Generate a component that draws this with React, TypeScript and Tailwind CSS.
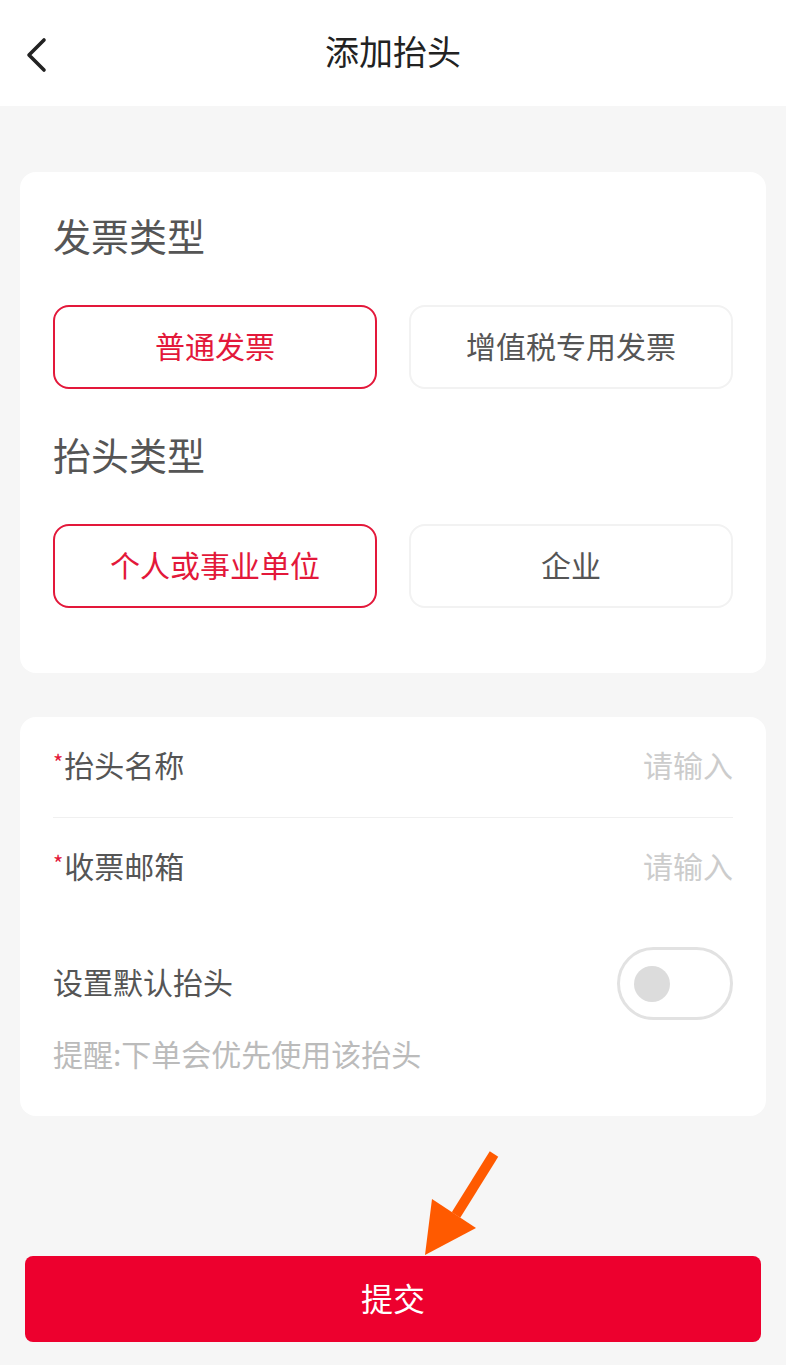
import { useState } from "react";

const FONT = "font-['Noto_Sans_CJK_SC','Noto_Sans',sans-serif]";

function OptionButton({
  label,
  active,
  onClick,
}: {
  label: string;
  active: boolean;
  onClick: () => void;
}) {
  return (
    <button
      type="button"
      onClick={onClick}
      className={
        active
          ? "flex h-[84px] flex-1 items-center justify-center rounded-[16px] border-2 border-[#e3183a] bg-white pb-[4px] text-[30px] text-[#e3183a]"
          : "flex h-[84px] flex-1 items-center justify-center rounded-[16px] border-2 border-[#f2f2f2] bg-white pb-[4px] text-[30px] text-[#555555]"
      }
    >
      {label}
    </button>
  );
}

function InputRow({ label, withBorder }: { label: string; withBorder?: boolean }) {
  return (
    <div
      className={
        withBorder
          ? "flex h-[101px] items-center border-b border-[#f0f0f0] pb-[5px]"
          : "flex h-[100px] items-center pb-[5px]"
      }
    >
      <span className="relative -top-[4px] mr-[1px] text-[22px] leading-none text-[#e3183a]">*</span>
      <span className="text-[30px] text-[#555555]">{label}</span>
      <input
        placeholder="请输入"
        className="ml-auto w-[260px] bg-transparent text-right text-[30px] text-[#333333] outline-none placeholder:text-[#cccccc]"
      />
    </div>
  );
}

export default function App() {
  const [invoiceType, setInvoiceType] = useState("normal");
  const [titleType, setTitleType] = useState("personal");
  const [isDefault, setIsDefault] = useState(false);

  return (
    <div className={`relative flex min-h-[1365px] w-full flex-col bg-[#f6f6f6] ${FONT}`}>
      {/* header */}
      <div className="relative flex h-[106px] items-center justify-center bg-white pb-[5px]">
        <button type="button" className="absolute left-[21px] top-[33px] p-1">
          <svg width="24" height="36" viewBox="0 0 24 36" fill="none">
            <polyline
              points="19,3 4,18 19,33"
              stroke="#222222"
              strokeWidth="3.6"
              strokeLinecap="round"
              strokeLinejoin="round"
            />
          </svg>
        </button>
        <h1 className="text-[34px] font-normal text-[#222222]">添加抬头</h1>
      </div>

      {/* invoice type card */}
      <div className="mx-[20px] mt-[66px] rounded-[16px] bg-white px-[33px] pb-[65px] pt-[40px]">
        <div className="flex h-[50px] items-center pb-[6px] text-[38px] text-[#555555]">发票类型</div>
        <div className="mt-[43px] flex gap-[32px]">
          <OptionButton
            label="普通发票"
            active={invoiceType === "normal"}
            onClick={() => setInvoiceType("normal")}
          />
          <OptionButton
            label="增值税专用发票"
            active={invoiceType === "vat"}
            onClick={() => setInvoiceType("vat")}
          />
        </div>
        <div className="mt-[42px] flex h-[50px] items-center pb-[6px] text-[38px] text-[#555555]">抬头类型</div>
        <div className="mt-[43px] flex gap-[32px]">
          <OptionButton
            label="个人或事业单位"
            active={titleType === "personal"}
            onClick={() => setTitleType("personal")}
          />
          <OptionButton
            label="企业"
            active={titleType === "company"}
            onClick={() => setTitleType("company")}
          />
        </div>
      </div>

      {/* form card */}
      <div className="mx-[20px] mt-[44px] rounded-[16px] bg-white px-[33px] pb-[43px]">
        <InputRow label="抬头名称" withBorder />
        <InputRow label="收票邮箱" />
        <div className="mt-[29px] flex h-[73px] items-center justify-between">
          <span className="pb-[4px] text-[30px] text-[#555555]">设置默认抬头</span>
          <button
            type="button"
            onClick={() => setIsDefault(!isDefault)}
            className={
              isDefault
                ? "flex h-[73px] w-[116px] items-center justify-end rounded-full border-[3px] border-[#e3183a] bg-[#e3183a] pr-[14px]"
                : "flex h-[73px] w-[116px] items-center rounded-full border-[3px] border-[#e2e2e2] bg-white pl-[14px]"
            }
          >
            <span
              className={
                isDefault
                  ? "h-[36px] w-[36px] rounded-full bg-white"
                  : "h-[36px] w-[36px] rounded-full bg-[#dcdcdc]"
              }
            />
          </button>
        </div>
        <p className="mt-[13px] text-[30px] leading-[40px] text-[#bbbbbb]">提醒:下单会优先使用该抬头</p>
      </div>

      {/* submit */}
      <button
        type="button"
        className="mx-[25px] mt-[140px] flex h-[86px] items-center justify-center rounded-[8px] bg-[#ed002e] pb-[4px] text-[32px] text-white"
      >
        提交
      </button>
      <div className="h-[24px]" />

      {/* annotation arrow */}
      <svg
        className="pointer-events-none absolute left-[420px] top-[1145px]"
        width="90"
        height="115"
        viewBox="0 0 90 115"
      >
        <line x1="74" y1="9" x2="36" y2="70" stroke="#ff5a00" strokeWidth="10" />
        <polygon points="12,54 56,83 5,110" fill="#ff5a00" />
      </svg>
    </div>
  );
}
